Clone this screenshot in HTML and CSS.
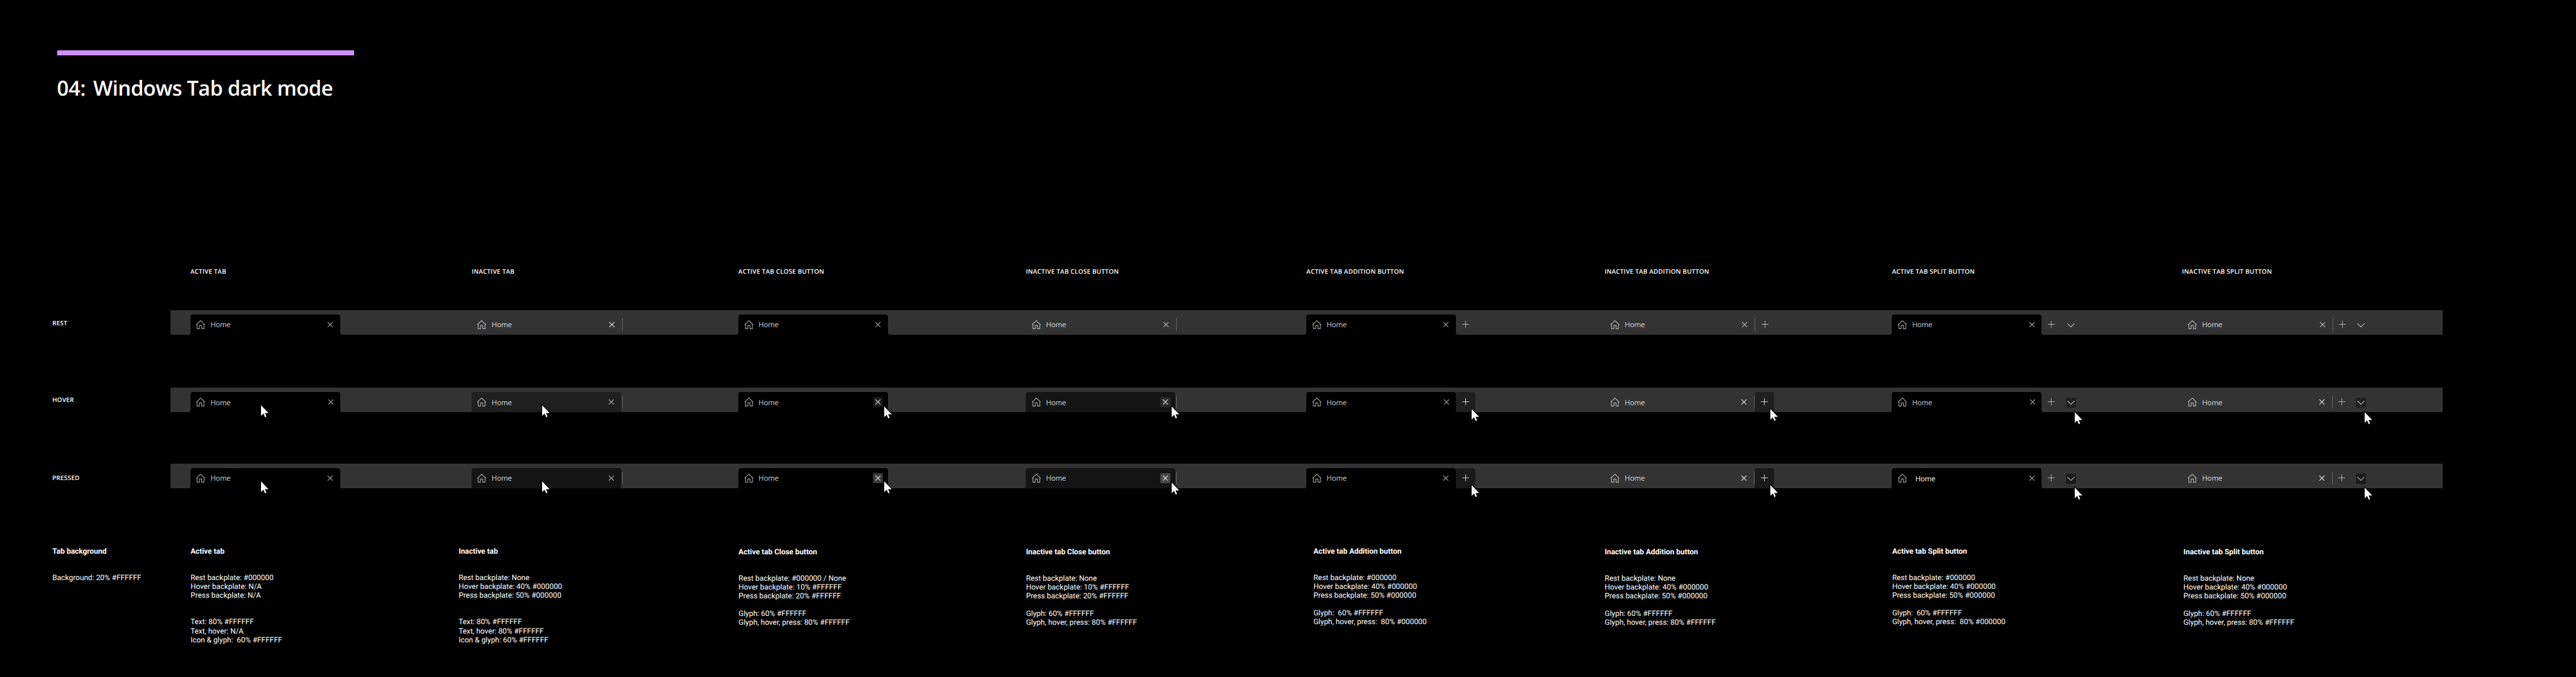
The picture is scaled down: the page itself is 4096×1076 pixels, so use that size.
FILE: index.html
```html
<!DOCTYPE html>
<html lang="en">
<head>
<meta charset="utf-8">
<title>04: Windows Tab dark mode</title>
<link rel="stylesheet" href="styles.css">
</head>
<body>
<svg class="defs" aria-hidden="true">
  <symbol id="home" viewBox="0 0 16 16"><path d="M1 8.3 7.9 1.5l6.8 6.8M2.4 7.1v7.4h3.7V9.4h3.6v5.1h3.7V7.1" fill="none" stroke="currentColor" stroke-width="1.15"/></symbol>
  <symbol id="close" viewBox="0 0 16 16"><path d="M4 4l8 8M12 4l-8 8" fill="none" stroke="currentColor" stroke-width="1.15"/></symbol>
  <symbol id="plus" viewBox="0 0 11 11"><path d="M5.5 0v11M0 5.5h11" fill="none" stroke="currentColor"/></symbol>
  <symbol id="chevron" viewBox="0 0 16 16"><path d="M2.4 5.1 8 10.6l5.6-5.5" fill="none" stroke="currentColor" stroke-width="1.2"/></symbol>
  <symbol id="pointer" viewBox="-2 -3 18 26"><path d="M0 0v17l3.9-3.7 2.5 5.9 2.3-1-2.5-5.7H12z" fill="#fff" stroke="#000" stroke-width="2" paint-order="stroke"/></symbol>
</svg>
<main class="board">
  <header class="title">
    <div class="accent"></div>
    <h1><span>04:</span> Windows Tab dark mode</h1>
  </header>

  <div class="columns heads">
    <h2>ACTIVE TAB</h2><h2>INACTIVE TAB</h2><h2>ACTIVE TAB CLOSE BUTTON</h2><h2>INACTIVE TAB CLOSE BUTTON</h2>
    <h2>ACTIVE TAB ADDITION BUTTON</h2><h2>INACTIVE TAB ADDITION BUTTON</h2><h2>ACTIVE TAB SPLIT BUTTON</h2><h2>INACTIVE TAB SPLIT BUTTON</h2>
  </div>

  <section class="row rest">
    <h2 class="state">REST</h2>
    <div class="strip columns">
      <div class="cell"><div class="tab active"><svg class="home"><use href="#home"/></svg><span>Home</span><svg class="x"><use href="#close"/></svg></div></div>
      <div class="cell"><div class="tab nudge"><svg class="home"><use href="#home"/></svg><span>Home</span><svg class="x lit"><use href="#close"/></svg></div><i class="sep"></i></div>
      <div class="cell"><div class="tab active"><svg class="home"><use href="#home"/></svg><span>Home</span><svg class="x"><use href="#close"/></svg></div></div>
      <div class="cell"><div class="tab nudge"><svg class="home"><use href="#home"/></svg><span>Home</span><svg class="x"><use href="#close"/></svg></div><i class="sep"></i></div>
      <div class="cell"><div class="tab active"><svg class="home"><use href="#home"/></svg><span>Home</span><svg class="x"><use href="#close"/></svg></div><div class="add"><svg><use href="#plus"/></svg></div></div>
      <div class="cell"><div class="tab nudge"><svg class="home"><use href="#home"/></svg><span>Home</span><svg class="x"><use href="#close"/></svg></div><i class="sep"></i><div class="add"><svg><use href="#plus"/></svg></div></div>
      <div class="cell"><div class="tab active"><svg class="home"><use href="#home"/></svg><span>Home</span><svg class="x"><use href="#close"/></svg></div><div class="add"><svg><use href="#plus"/></svg></div><svg class="split"><use href="#chevron"/></svg></div>
      <div class="cell"><div class="tab nudge"><svg class="home"><use href="#home"/></svg><span>Home</span><svg class="x"><use href="#close"/></svg></div><i class="sep"></i><div class="add"><svg><use href="#plus"/></svg></div><svg class="split far"><use href="#chevron"/></svg></div>
    </div>
  </section>

  <section class="row hover">
    <h2 class="state">HOVER</h2>
    <div class="strip columns">
      <div class="cell"><div class="tab active nudge"><svg class="home"><use href="#home"/></svg><span>Home</span><svg class="x"><use href="#close"/></svg></div><svg class="pointer at-tab"><use href="#pointer"/></svg></div>
      <div class="cell"><div class="tab hovered"><svg class="home"><use href="#home"/></svg><span>Home</span><svg class="x"><use href="#close"/></svg></div><i class="sep"></i><svg class="pointer at-tab"><use href="#pointer"/></svg></div>
      <div class="cell"><div class="tab active"><svg class="home"><use href="#home"/></svg><span>Home</span><svg class="x plate"><use href="#close"/></svg></div><svg class="pointer at-close low"><use href="#pointer"/></svg></div>
      <div class="cell"><div class="tab footed"><svg class="home"><use href="#home"/></svg><span>Home</span><svg class="x plate"><use href="#close"/></svg></div><i class="sep"></i><svg class="pointer at-close low"><use href="#pointer"/></svg></div>
      <div class="cell"><div class="tab active nudge"><svg class="home"><use href="#home"/></svg><span>Home</span><svg class="x"><use href="#close"/></svg></div><div class="add on"><svg><use href="#plus"/></svg></div><svg class="pointer at-add"><use href="#pointer"/></svg></div>
      <div class="cell"><div class="tab"><svg class="home"><use href="#home"/></svg><span>Home</span><svg class="x lit"><use href="#close"/></svg></div><i class="sep tight"></i><div class="add on square"><svg><use href="#plus"/></svg></div><svg class="pointer at-add next"><use href="#pointer"/></svg></div>
      <div class="cell"><div class="tab active nudge"><svg class="home"><use href="#home"/></svg><span>Home</span><svg class="x"><use href="#close"/></svg></div><div class="add"><svg><use href="#plus"/></svg></div><svg class="split on"><use href="#chevron"/></svg><svg class="pointer at-split"><use href="#pointer"/></svg></div>
      <div class="cell"><div class="tab"><svg class="home"><use href="#home"/></svg><span>Home</span><svg class="x lit"><use href="#close"/></svg></div><i class="sep tight"></i><div class="add"><svg><use href="#plus"/></svg></div><svg class="split near on"><use href="#chevron"/></svg><svg class="pointer at-split"><use href="#pointer"/></svg></div>
    </div>
  </section>

  <section class="row pressed">
    <h2 class="state">PRESSED</h2>
    <div class="strip columns">
      <div class="cell"><div class="tab active"><svg class="home"><use href="#home"/></svg><span>Home</span><svg class="x"><use href="#close"/></svg></div><svg class="pointer at-tab"><use href="#pointer"/></svg></div>
      <div class="cell"><div class="tab held"><svg class="home"><use href="#home"/></svg><span>Home</span><svg class="x"><use href="#close"/></svg></div><i class="sep"></i><svg class="pointer at-tab"><use href="#pointer"/></svg></div>
      <div class="cell"><div class="tab active"><svg class="home"><use href="#home"/></svg><span>Home</span><svg class="x plate"><use href="#close"/></svg></div><svg class="pointer at-close"><use href="#pointer"/></svg></div>
      <div class="cell"><div class="tab footed"><svg class="home"><use href="#home"/></svg><span>Home</span><svg class="x plate"><use href="#close"/></svg></div><i class="sep"></i><svg class="pointer at-close low"><use href="#pointer"/></svg></div>
      <div class="cell"><div class="tab active"><svg class="home"><use href="#home"/></svg><span>Home</span><svg class="x"><use href="#close"/></svg></div><div class="add on"><svg><use href="#plus"/></svg></div><svg class="pointer at-add"><use href="#pointer"/></svg></div>
      <div class="cell"><div class="tab"><svg class="home"><use href="#home"/></svg><span>Home</span><svg class="x lit"><use href="#close"/></svg></div><i class="sep tight"></i><div class="add on square"><svg><use href="#plus"/></svg></div><svg class="pointer at-add next"><use href="#pointer"/></svg></div>
      <div class="cell"><div class="tab active"><svg class="home"><use href="#home"/></svg><span class="shifted">Home</span><svg class="x"><use href="#close"/></svg></div><div class="add"><svg><use href="#plus"/></svg></div><svg class="split on"><use href="#chevron"/></svg><svg class="pointer at-split"><use href="#pointer"/></svg></div>
      <div class="cell"><div class="tab"><svg class="home"><use href="#home"/></svg><span>Home</span><svg class="x lit"><use href="#close"/></svg></div><i class="sep tight"></i><div class="add"><svg><use href="#plus"/></svg></div><svg class="split near on"><use href="#chevron"/></svg><svg class="pointer at-split"><use href="#pointer"/></svg></div>
    </div>
  </section>

  <section class="specs">
    <article><h3>Tab background</h3><p>Background: 20% #FFFFFF</p></article>
    <article><h3>Active tab</h3><p>Rest backplate: #000000
Hover backplate: N/A
Press backplate: N/A


Text: 80% #FFFFFF
Text, hover: N/A
Icon &amp; glyph:  60% #FFFFFF</p></article>
    <article><h3>Inactive tab</h3><p>Rest backplate: None
Hover backplate: 40% #000000
Press backplate: 50% #000000


Text: 80% #FFFFFF
Text, hover: 80% #FFFFFF
Icon &amp; glyph: 60% #FFFFFF</p></article>
    <article class="down"><h3>Active tab Close button</h3><p>Rest backplate: #000000 / None
Hover backplate: 10% #FFFFFF
Press backplate: 20% #FFFFFF

Glyph: 60% #FFFFFF
Glyph, hover, press: 80% #FFFFFF</p></article>
    <article class="down"><h3>Inactive tab Close button</h3><p>Rest backplate: None
Hover backplate: 10% #FFFFFF
Press backplate: 20% #FFFFFF

Glyph: 60% #FFFFFF
Glyph, hover, press: 80% #FFFFFF</p></article>
    <article><h3>Active tab Addition button</h3><p>Rest backplate: #000000
Hover backplate: 40% #000000
Press backplate: 50% #000000

Glyph:  60% #FFFFFF
Glyph, hover, press:  80% #000000</p></article>
    <article class="down"><h3>Inactive tab Addition button</h3><p>Rest backplate: None
Hover backplate: 40% #000000
Press backplate: 50% #000000

Glyph: 60% #FFFFFF
Glyph, hover, press: 80% #FFFFFF</p></article>
    <article><h3>Active tab Split button</h3><p>Rest backplate: #000000
Hover backplate: 40% #000000
Press backplate: 50% #000000

Glyph:  60% #FFFFFF
Glyph, hover, press:  80% #000000</p></article>
    <article class="down"><h3>Inactive tab Split button</h3><p>Rest backplate: None
Hover backplate: 40% #000000
Press backplate: 50% #000000

Glyph: 60% #FFFFFF
Glyph, hover, press: 80% #FFFFFF</p></article>
  </section>
</main>
</body>
</html>
```
FILE: styles.css
```css
* { box-sizing: border-box; }

html, body { margin: 0; background: #000; overflow: hidden; }

body {
  color: #fff;
  font-family: "Open Sans", "Noto Sans", sans-serif;
  text-rendering: geometricPrecision;
}

h1, h2, h3, p { margin: 0; }

.defs { position: absolute; width: 0; height: 0; }

.board {
  zoom: 0.99587;
  width: 4113px;
  height: 1080px;
  padding-top: 80.4px;
  display: flex;
  flex-direction: column;
}

/* Title */
.title { height: 346.6px; padding-left: 91px; }
.accent { width: 474px; height: 8px; background: #cf8fff; }
.title h1 {
  margin-top: 32px;
  font-size: 33px;
  font-weight: 600;
  line-height: 40px;
  letter-spacing: -0.5px;
}
.title h1 span { margin-right: 4px; letter-spacing: -0.3px; }

/* Column headings and state labels */
.columns {
  display: grid;
  grid-template-columns: 449px 426px 459px 448px 476px 459px 463px 416px;
}
.heads { margin-left: 304px; height: 68px; }
h2 {
  font-size: 10px;
  font-weight: 600;
  line-height: 14px;
  letter-spacing: 0.24px;
  white-space: nowrap;
}

.row { display: flex; align-items: flex-start; padding-left: 83.5px; }
.rest { height: 124px; }
.hover { height: 121px; }
.pressed { height: 132px; }
.state { width: 188.5px; padding-top: 14px; }
.hover .state { padding-top: 12.6px; }
.pressed .state { padding-top: 16px; }

/* Tab strip */
.strip { width: 3628px; height: 39px; padding-left: 32px; background: #333; }
.cell { position: relative; display: flex; align-items: flex-start; padding-top: 7px; }

.tab {
  --fill: transparent;
  position: relative;
  display: flex;
  align-items: center;
  width: 239px;
  height: 32px;
  padding: 0 8px 0 8.5px;
  border-radius: 4px 4px 0 0;
  background: var(--fill);
}
.tab.active { --fill: #000; }
.tab.hovered { --fill: #1f1f1f; }
.tab.held, .tab.footed { --fill: #141414; }
.tab.nudge { padding-right: 7px; }

.tab.active::before, .tab.active::after, .tab.footed::before {
  content: "";
  position: absolute;
  bottom: 0;
  width: 3px;
  height: 3px;
}
.tab::before { left: -3px; background: radial-gradient(circle at 0 0, transparent 2.7px, var(--fill) 3.2px); }
.tab::after { right: -3px; background: radial-gradient(circle at 100% 0, transparent 2.7px, var(--fill) 3.2px); }

.tab span {
  margin-left: 7.6px;
  padding-top: 2.6px;
  font-size: 11.6px;
  line-height: 16px;
  letter-spacing: -0.15px;
  color: rgba(255, 255, 255, 0.8);
}
.tab span.shifted { margin-left: 12.6px; padding-top: 4.6px; color: #fff; }

.home { width: 16px; height: 16px; color: rgba(255, 255, 255, 0.6); }
.x { width: 16px; height: 16px; margin-left: auto; border-radius: 2px; color: rgba(255, 255, 255, 0.6); }
.x.lit { color: rgba(255, 255, 255, 0.8); }
.x.plate { color: rgba(255, 255, 255, 0.8); background: rgba(255, 255, 255, 0.1); }
.pressed .x.plate { background: rgba(255, 255, 255, 0.22); }

.sep { width: 1px; height: 20px; margin: 6px 0 0 1px; background: #666; }
.sep.tight { margin-left: 0; }

.add { width: 31px; height: 32px; padding: 10px; border-radius: 4px; color: rgba(255, 255, 255, 0.6); }
.add svg { display: block; width: 11px; height: 11px; }
.add.on { background: #1f1f1f; color: rgba(255, 255, 255, 0.8); }
.add.square { border-radius: 4px 4px 0 0; }
.pressed .add.on { background: #1a1a1a; }

.split { width: 16px; height: 16px; margin: 9px 0 0 8px; border-radius: 2px; color: rgba(255, 255, 255, 0.6); }
.split.far { margin-left: 6px; }
.split.near { margin-left: 7px; }
.split.on { background: #1f1f1f; }
.pressed .split.on { background: #1a1a1a; }

/* Mouse pointers floating over the strips */
.pointer { position: absolute; width: 18px; height: 26px; }
.at-tab { left: 111px; top: 25px; }
.at-close { left: 231px; top: 25px; }
.at-close.low { top: 27px; }
.at-add { left: 262px; top: 31px; }
.at-add.next { left: 263px; }
.at-split { left: 289.3px; top: 35.3px; }

/* Written specifications */
.specs {
  display: grid;
  grid-template-columns: 220.5px 428px 447px 459px 459px 465px 459px 465px 400px;
  padding: 0.6px 0 0 83.7px;
  font: 12px/14.2px Roboto, sans-serif;
}
.specs h3 { font-size: 12px; font-weight: 700; line-height: 14.2px; }
.specs p { margin-top: 27.8px; white-space: pre; }
.down { padding-top: 1px; }
```
